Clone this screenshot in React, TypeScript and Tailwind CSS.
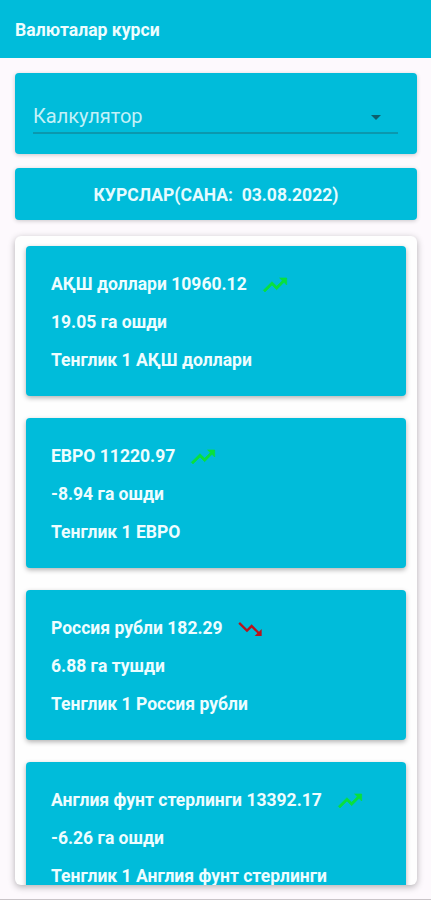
import React from 'react';
import { MdArrowDropDown } from 'react-icons/md';

// --- Types ---
interface Rate {
  name: string;
  value: string;
  change: string;
  isUp: boolean;
}

// --- Data ---
const RATES: Rate[] = [
  { name: 'АҚШ доллари', value: '10960.12', change: '19.05 га ошди', isUp: true },
  { name: 'ЕВРО', value: '11220.97', change: '-8.94 га ошди', isUp: true },
  { name: 'Россия рубли', value: '182.29', change: '6.88 га тушди', isUp: false },
  { name: 'Англия фунт стерлинги', value: '13392.17', change: '-6.26 га ошди', isUp: true },
];

// --- Components ---
const TrendUpIcon: React.FC = () => (
  <svg viewBox="0 0 24 24" className="ml-[14px] size-[28px] text-[#08e03c]" fill="currentColor">
    <path
      d="M16 6l2.29 2.29-4.88 4.88-4-4L2 16.59 3.41 18l6-6 4 4 6.3-6.29L22 12V6z"
      stroke="currentColor"
      strokeWidth="0.6"
      strokeLinejoin="round"
    />
  </svg>
);

const TrendDownIcon: React.FC = () => (
  <svg viewBox="0 0 24 24" className="ml-[13px] size-[28px] text-[#b8141d]" fill="currentColor">
    <path d="M16 18l2.29-2.29-4.88-4.88-4 4L2 7.41 3.41 6l6 6 4-4 6.3 6.29L22 12v6z" />
  </svg>
);

const RateCard: React.FC<{ rate: Rate }> = ({ rate }) => {
  return (
    <div className="h-[150px] shrink-0 rounded-[4px] bg-[#00bcda] pl-[25px] pt-[20px] text-[17.55px] font-bold leading-[37.8px] whitespace-nowrap text-[#eefdff] shadow-[0_2px_5px_rgba(0,0,0,0.3)]">
      <div className="flex h-[37.8px] items-center">
        <span>{rate.name} {rate.value}</span>
        {rate.isUp ? <TrendUpIcon /> : <TrendDownIcon />}
      </div>
      <p>{rate.change}</p>
      <p>Тенглик 1 {rate.name}</p>
    </div>
  );
};

const App: React.FC = () => {
  return (
    <div className="flex h-[900px] w-full flex-col overflow-hidden border-b border-[#c9c4c8] bg-[#fdf9fd] font-['Roboto',sans-serif]">
      <header className="flex h-[58px] shrink-0 items-center bg-[#00bcda] pt-[2px] pl-[15px] text-[17.6px] font-bold text-[#eefdff]">
        Валюталар курси
      </header>

      <main className="flex min-h-0 flex-1 flex-col pt-[15px] pr-[14px] pb-[14px] pl-[15px]">
        {/* Calculator select */}
        <section className="h-[81px] shrink-0 rounded-[4px] bg-[#00bcda] pr-[19px] pl-[18px] pt-[26px] shadow-[0_1px_4px_rgba(0,0,0,0.2)]">
          <div className="flex h-[35px] items-center justify-between border-b-2 border-[#0b98ae] pr-[10px] text-[20px] text-[#c3f1f8]">
            <span>Калкулятор</span>
            <MdArrowDropDown className="mt-[2px] size-[24px] text-[#0d5f6e]" />
          </div>
        </section>

        <section className="mt-[14px] flex h-[52px] shrink-0 items-center justify-center rounded-[4px] bg-[#00bcda] pt-[3px] text-[17.55px] font-bold whitespace-pre text-[#e6fbff] shadow-[0_1px_4px_rgba(0,0,0,0.2)]">
          КУРСЛАР(САНА:{'  '}03.08.2022)
        </section>

        {/* Rates list */}
        <section className="mt-4 min-h-0 flex-1 rounded-[6px] bg-[#fefefe] shadow-[0_2px_7px_rgba(0,0,0,0.3)]">
          <div className="flex h-full flex-col gap-[22px] overflow-hidden rounded-[6px] px-[11px] pt-[10px]">
            {RATES.map((rate) => (
              <RateCard key={rate.name} rate={rate} />
            ))}
          </div>
        </section>
      </main>
    </div>
  );
};

export default App;
